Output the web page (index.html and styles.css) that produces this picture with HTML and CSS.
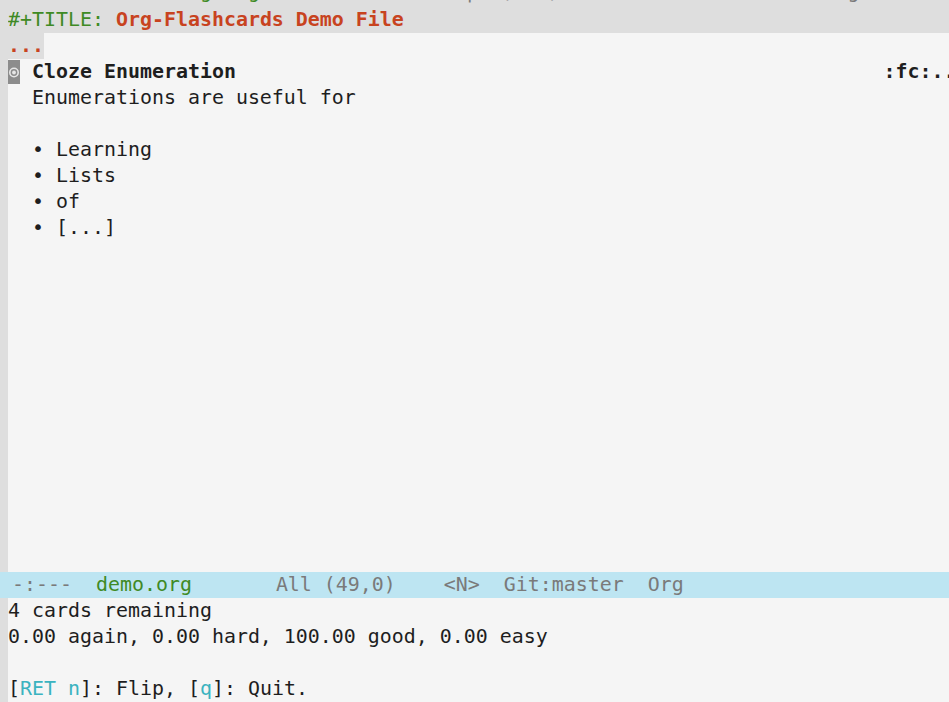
FILE: index.html
```html
<!DOCTYPE html>
<html>
<head>
<meta charset="utf-8">
<link rel="stylesheet" href="styles.css">
</head>
<body>
<div class="frame">
  <div class="header">
    <div class="peek"><div class="line"><span class="green">                g   g</span><span class="muted">                 |  ( / )                        g</span></div></div>
    <div class="line"><span class="green">#+TITLE: </span><span class="red bold">Org-Flashcards Demo File</span></div>
  </div>
  <div class="buffer">
    <div class="fringe"></div>
    <div class="text">
      <div class="line"><span class="ellipsis red bold">...</span></div>
      <div class="line"><span class="cursor"><svg width="12" height="24" viewBox="0 0 12 24"><circle cx="6" cy="12.5" r="4.2" fill="none" stroke="#e6e6e6" stroke-width="1.6"/><circle cx="6" cy="12.5" r="1.9" fill="#e6e6e6"/></svg></span><span class="bold"> Cloze Enumeration                                                      :fc:...</span></div>
      <div class="line">  Enumerations are useful for</div>
      <div class="line"> </div>
      <div class="line">  • Learning</div>
      <div class="line">  • Lists</div>
      <div class="line">  • of</div>
      <div class="line">  • [...]</div>
    </div>
  </div>
  <div class="modeline line"><span class="muted">-:---  </span><span class="green">demo.org</span><span class="muted">       All (49,0)    &lt;N&gt;  Git:master  Org</span></div>
  <div class="echo">
    <div class="fringe"></div>
    <div class="text">
      <div class="line">4 cards remaining</div>
      <div class="line">0.00 again, 0.00 hard, 100.00 good, 0.00 easy</div>
      <div class="line"> </div>
      <div class="line">[<span class="teal">RET n</span>]: Flip, [<span class="teal">q</span>]: Quit.</div>
    </div>
  </div>
</div>
</body>
</html>
```

FILE: styles.css
```css
html, body {
  margin: 0;
  padding: 0;
}
body {
  background: #f5f5f5;
  color: #1e1e1e;
  font-family: "DejaVu Sans Mono", "Liberation Mono", monospace;
  font-size: 19.93px;
  width: 949px;
  height: 702px;
  overflow: hidden;
}
.frame {
  display: flex;
  flex-direction: column;
  height: 702px;
}
.line {
  height: 26px;
  line-height: 26px;
  white-space: pre;
  overflow: hidden;
}
.header {
  background: #dedede;
  padding-left: 8px;
  height: 33px;
}
.peek {
  height: 7px;
  overflow: hidden;
}
.peek .line {
  margin-top: -21px;
}
.buffer {
  flex: 1;
  display: flex;
  min-height: 0;
}
.echo {
  display: flex;
}
.fringe {
  width: 8px;
  flex: none;
  background: #dedede;
}
.text {
  flex: 1;
  min-width: 0;
  overflow: hidden;
}
.ellipsis {
  background: #dedede;
  display: inline-block;
  height: 26px;
}
.cursor {
  display: inline-block;
  width: 12px;
  height: 24px;
  background: #8c8c8c;
  vertical-align: top;
  margin-top: 1px;
}
.cursor svg {
  display: block;
}
.modeline {
  background: #bde5f2;
  padding-left: 12px;
}
.bold { font-weight: bold; }
.green { color: #3f8a25; }
.red { color: #c8431f; }
.muted { color: #7a7a7a; }
.teal { color: #3bb3c0; }
```
